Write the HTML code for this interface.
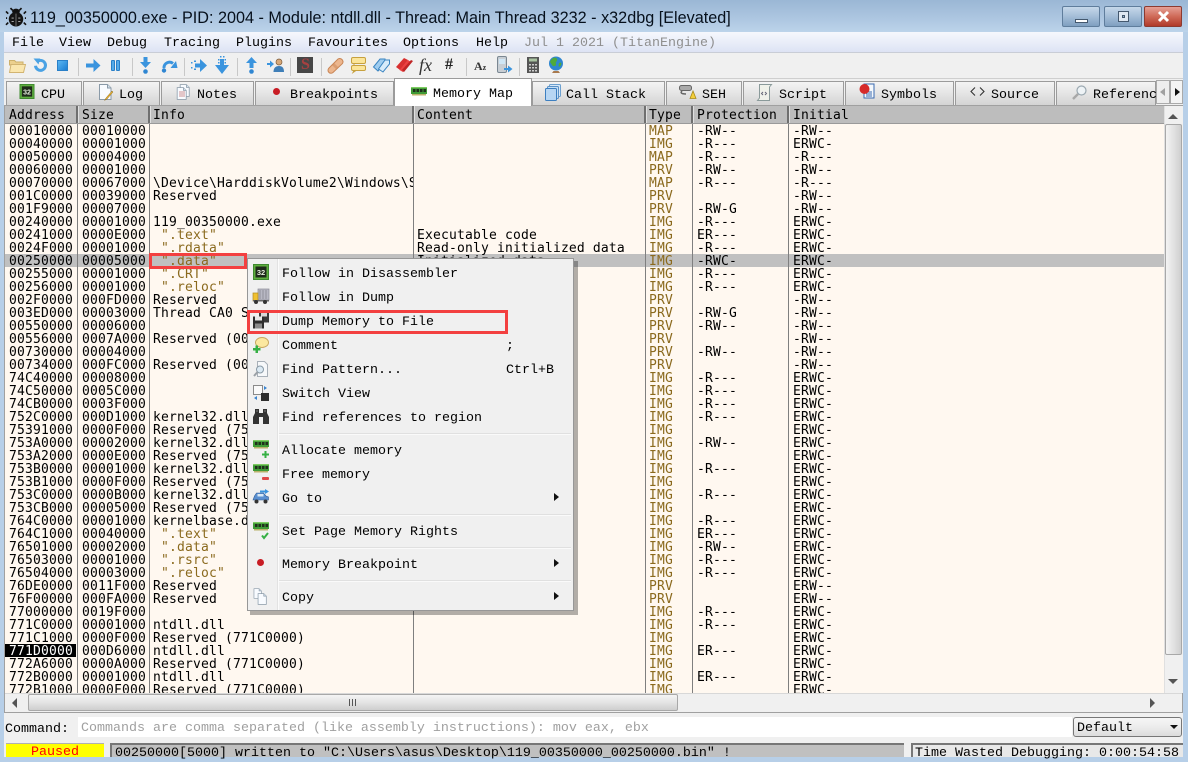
<!DOCTYPE html>
<html><head><meta charset="utf-8"><title>x32dbg</title>
<style>
html,body{margin:0;padding:0}
body{width:1188px;height:757px;overflow:hidden;position:relative;background:#b7cfe8;font-family:"Liberation Mono",monospace;font-size:13.33px;color:#000}
div,pre,span.a,svg.a{position:absolute}
svg{position:absolute;overflow:visible}
.t{position:absolute;white-space:pre;line-height:16px}
.tab{position:absolute;top:81px;height:24px;background:linear-gradient(#f4f4f4,#e6e6e6 45%,#d4d4d4);border:1px solid #9b9b9b;border-bottom:0;box-sizing:border-box}
.sep{position:absolute;top:58px;height:18px;width:1px;background:#c8c8c8}
pre{margin:0;font:13px/13px "DejaVu Sans Mono",monospace;letter-spacing:.17px;overflow:hidden;top:125px;height:569px}
pre b{font-weight:400;color:#8b6a1e}
.h{position:absolute;top:108px;font:13px/16px "DejaVu Sans Mono",monospace;letter-spacing:.17px;white-space:pre}
.vl{position:absolute;top:124px;height:569px;width:1px;background:#7f7f7f}
.hs{position:absolute;top:106px;height:17px;width:2px;background:#6f6f6f;border-right:1px solid #e0e0e0}
.ms{position:absolute;left:279px;width:292px;height:2px;background:#e0e0e0;border-bottom:1px solid #fafafa;box-sizing:border-box}
.red{position:absolute;border:3px solid #f34040;box-sizing:border-box}
.arr{position:absolute;width:0;height:0;border-left:5px solid #111;border-top:4px solid transparent;border-bottom:4px solid transparent}
</style></head><body>
<svg width="0" height="0" style="position:absolute">
<defs>
<symbol id="chip" viewBox="0 0 16 16"><rect x="0" y="0" width="16" height="16" fill="#3e8a2e"/><rect x="1" y="1" width="14" height="14" fill="#5fae3f"/><rect x="2.500" y="2.500" width="11" height="11" fill="#1e2a1a"/><text x="8" y="11" text-anchor="middle" font-family="Liberation Sans" font-weight="700" font-size="7.500" fill="#e6eedc">32</text></symbol>
<symbol id="ram" viewBox="0 0 16 9"><rect y="0" width="16" height="7" fill="#3f9a36"/><rect y="0" width="16" height="1.2" fill="#7fcb63"/><path d="M2 2h2.500v3H2zM5.500 2H8v3H5.500zM9 2h2.500v3H9zM12.500 2H15v3h-2.500z" fill="#20301c"/><path d="M1 7h14v1.500H1z" fill="#b9b26a"/></symbol>
<symbol id="page" viewBox="0 0 14 16"><path d="M1.500.5h8l3.500 3.500v11.500h-11.500z" fill="#f8fbff" stroke="#8a9aa8"/><path d="M9.500.5v3.500h3.500" fill="#d4e2ee" stroke="#8a9aa8"/></symbol>
</defs></svg>

<!-- title bar -->
<div style="left:0;top:0;width:1188px;height:32px;background:linear-gradient(#9ab7d5,#aac4df 50%,#bcd3ea)"></div>
<svg style="left:6px;top:7px" width="20" height="20" viewBox="0 0 18 18"><path d="M6 3L4 1M12 3l2-2M2 6L0 4M16 6l2-2M1 10H0M17 10h1M2 14l-2 2M16 14l2 2" stroke="#111" stroke-width="1.500" fill="none"/><ellipse cx="9" cy="4" rx="3.500" ry="2.500" fill="#111"/><ellipse cx="9" cy="11" rx="6.500" ry="6.500" fill="#151515"/><path d="M9 6v11" stroke="#888" stroke-width=".7"/><path d="M5 10h2M11 10h2M5 13h2M11 13h2" stroke="#bbb" stroke-width=".8"/></svg>
<div class="t" id="title" style="left:30px;top:9px;font:16.22px/18px 'Liberation Sans',sans-serif;color:#06101c">119_00350000.exe - PID: 2004 - Module: ntdll.dll - Thread: Main Thread 3232 - x32dbg [Elevated]</div>
<div style="left:1062px;top:6px;width:38px;height:21px;box-sizing:border-box;border:1px solid #5f7d9c;border-radius:2px;background:linear-gradient(#c6d8ea,#a4bdd7 50%,#7f9fc0)"><div style="left:12px;top:12px;width:13px;height:4px;background:#fff;border:1px solid #44586e;box-sizing:border-box"></div></div>
<div style="left:1104px;top:6px;width:38px;height:21px;box-sizing:border-box;border:1px solid #5f7d9c;border-radius:2px;background:linear-gradient(#c6d8ea,#a4bdd7 50%,#7f9fc0)"><div style="left:13px;top:4px;width:11px;height:11px;border:1px solid #44586e;box-sizing:border-box;background:#dfe8f2"><div style="left:3px;top:3px;width:3px;height:3px;background:#9ab4ce;border:1px solid #44586e;box-sizing:border-box"></div></div></div>
<div style="left:1144px;top:6px;width:38px;height:21px;box-sizing:border-box;border:1px solid #8c3a30;border-radius:2px;background:linear-gradient(#e5a095,#cf6a58 50%,#b03a2a)"><svg style="left:12px;top:4px" width="13" height="11"><path d="M2 1l9 9M11 1l-9 9" stroke="#fff" stroke-width="3"/></svg></div>

<!-- client -->
<div style="left:4px;top:32px;width:1179px;height:725px;background:#f0f0f0"></div>
<div style="left:4px;top:32px;width:1179px;height:20px;background:linear-gradient(#f6f8fd,#dde3f4);border-bottom:1px solid #c9cdd6;box-sizing:content-box"></div>
<div class="t" style="left:12px;top:36px">File</div>
<div class="t" style="left:59px;top:36px">View</div>
<div class="t" style="left:107px;top:36px">Debug</div>
<div class="t" style="left:164px;top:36px">Tracing</div>
<div class="t" style="left:236px;top:36px">Plugins</div>
<div class="t" style="left:308px;top:36px">Favourites</div>
<div class="t" style="left:403px;top:36px">Options</div>
<div class="t" style="left:476px;top:36px">Help</div>
<div class="t" style="left:524px;top:36px;color:#8f8f8f">Jul 1 2021 (TitanEngine)</div>
<div style="left:4px;top:78px;width:1179px;height:1px;background:#cfcfcf"></div>

<!-- toolbar -->
<svg style="left:9px;top:59px" width="17" height="14" viewBox="0 0 17 14"><path d="M.500 1.500h5l1.500 1.500h7v3H.500z" fill="#ecd08e" stroke="#cdb06a"/><path d="M.500 13.500l1.500-8h14.500l-2 8z" fill="#fae6ae" stroke="#d2b472"/></svg>
<svg style="left:33px;top:58px" width="15" height="15" viewBox="0 0 15 15"><path d="M4 3.800a5 5 0 1 1-1.500 4" fill="none" stroke="#4aa2e4" stroke-width="3"/><path d="M0.500 0.500l6.500 0 -1.500 6z" fill="#4aa2e4"/></svg>
<div style="left:57px;top:60px;width:11px;height:11px;box-sizing:border-box;background:linear-gradient(135deg,#5ab6f2,#1d7fd3);border:1px solid #2a80c8"></div>
<div class="sep" style="left:78px"></div>
<svg style="left:86px;top:59px" width="15" height="13" viewBox="0 0 15 13"><path d="M0 4.500h7.500V0l7 6.500-7 6.500V8.500H0z" fill="#3a94de"/></svg>
<div style="left:111px;top:60px;width:4px;height:11px;box-sizing:border-box;background:#55aae8;border:1px solid #2a80c8;border-radius:1px"></div><div style="left:116px;top:60px;width:4px;height:11px;box-sizing:border-box;background:#55aae8;border:1px solid #2a80c8;border-radius:1px"></div>
<div class="sep" style="left:132px"></div>
<svg style="left:140px;top:57px" width="11" height="17" viewBox="0 0 11 17"><path d="M3.500 0h4v5H11l-5.500 6L0 5h3.500z" fill="#3a94de"/><circle cx="5.500" cy="14.500" r="2.300" fill="#2f86d2"/></svg>
<svg style="left:161px;top:59px" width="17" height="14" viewBox="0 0 17 14"><path d="M3 9a5.500 5.500 0 0 1 9-4.500" fill="none" stroke="#3a94de" stroke-width="3"/><path d="M16.500 9h-7L15 2z" fill="#3a94de"/><circle cx="3" cy="11.500" r="2.200" fill="#2f86d2"/></svg>
<div class="sep" style="left:184px"></div>
<svg style="left:191px;top:59px" width="16" height="13" viewBox="0 0 16 13"><path d="M0 3h1.500v1.500H0zM0 8h1.500v1.500H0zM3 1.500h2V3H3zM3 9.500h2V11H3zM4 4.500h5V0l7 6.500-7 6.500V8.500H4z" fill="#3a94de"/></svg>
<svg style="left:215px;top:56px" width="14" height="18" viewBox="0 0 14 18"><path d="M5 3h4v6h5l-7 9-7-9h5z" fill="#3a94de"/><path d="M5 0h1.500v1.500H5zM8 0h1.500v1.500H8zM3 3h1.500v1.500H3zM9.500 3H11v1.500H9.500zM3 6h1.500v1.500H3zM9.500 6H11v1.500H9.500z" fill="#3a94de"/></svg>
<div class="sep" style="left:237px"></div>
<svg style="left:246px;top:57px" width="11" height="17" viewBox="0 0 11 17"><path d="M5.500 0L11 6H7.500v5h-4V6H0z" fill="#3a94de"/><circle cx="5.500" cy="14.500" r="2.300" fill="#2f86d2"/></svg>
<svg style="left:267px;top:58px" width="17" height="15" viewBox="0 0 17 15"><path d="M0 5h3V2.500L7 6 3 9.500V7H0z" fill="#3a94de"/><circle cx="12" cy="4" r="3" fill="#d8a878" stroke="#7a5a3a" stroke-width=".7"/><path d="M6.500 14c0-4 2-6 5.500-6s5 2 5 6z" fill="#3f7fb8"/></svg>
<div class="sep" style="left:290px"></div>
<div style="left:297px;top:57px;width:16px;height:16px;background:#474747"></div>
<div class="t" style="left:301px;top:57px;color:#a84040;font:bold 16px/16px 'Liberation Serif',serif">S</div>
<div class="sep" style="left:321px"></div>
<svg style="left:327px;top:57px" width="17" height="17" viewBox="0 0 17 17"><path d="M2 11L11 2a3.300 3.300 0 0 1 4.500 4.500L6 15.500A3 3 0 0 1 2 11z" fill="#ecb68e" stroke="#c98555"/><path d="M6 7l4 4" stroke="#c98555" stroke-width="3" opacity=".5"/></svg>
<svg style="left:351px;top:57px" width="15" height="16" viewBox="0 0 15 16"><rect x=".5" y=".5" width="14" height="6" rx="1.500" fill="#fbe59a" stroke="#c7a13e"/><rect x=".5" y="8.500" width="14" height="5" rx="1.500" fill="#fbe59a" stroke="#c7a13e"/><path d="M3 6.500v2M3 13.500l-1 2 3-2" stroke="#c7a13e" fill="none"/></svg>
<svg style="left:373px;top:57px" width="17" height="16" viewBox="0 0 17 16"><path d="M0.500 10L7 2l5 0 0 4-7 8z" fill="#9fcdf0" stroke="#3a84c0"/><path d="M5.500 12L12 3l4.500 0 0 4-6.500 8z" fill="#d6ebfa" stroke="#3a84c0"/></svg>
<svg style="left:396px;top:57px" width="18" height="16" viewBox="0 0 18 16"><path d="M0 10L8 1l4 2-8 10z" fill="#d83030"/><path d="M3.500 13L12 3l3 2-8 10z" fill="#ec4040"/><path d="M8 15l9-11-2-1-9 10z" fill="#bf2525"/></svg>
<div class="t" style="left:419px;top:56px;font:italic 18px/18px 'Liberation Serif',serif;color:#333">fx</div>
<div class="t" style="left:445px;top:56px;font:bold 16px/18px 'Liberation Serif',serif;color:#222">#</div>
<div class="sep" style="left:466px"></div>
<div class="t" style="left:474px;top:58px;font:bold 12px/16px 'Liberation Serif',serif;color:#333">A<span style="font-size:8px">z</span></div>
<svg style="left:497px;top:56px" width="16" height="18" viewBox="0 0 16 18"><rect x=".5" y=".5" width="9" height="16" rx="1.500" fill="#c8ced4" stroke="#7a8792"/><rect x="2" y="3" width="6" height="5" fill="#cfe6f5"/><path d="M7 12h4V9.500l4.500 3.500-4.500 3.500V14H7z" fill="#3a94de"/></svg>
<div class="sep" style="left:519px"></div>
<svg style="left:527px;top:57px" width="12" height="16" viewBox="0 0 12 16"><rect width="12" height="16" fill="#555"/><rect x="2" y="1.500" width="8" height="3" fill="#a8c2a0"/><path d="M2 7h2v1.500H2zM5 7h2v1.500H5zM8 7h2v1.500H8zM2 10h2v1.500H2zM5 10h2v1.500H5zM8 10h2v1.500H8zM2 13h2v1.500H2zM5 13h2v1.500H5zM8 13h2v1.500H8z" fill="#ccc"/></svg>
<svg style="left:548px;top:56px" width="16" height="18" viewBox="0 0 16 18"><circle cx="8" cy="7.500" r="7" fill="#2e86d0"/><path d="M3 4c2-3 5-3 6-1s-2 3-1 5-3 3-4 1-3-3-1-5zM11 7c2-1 3 0 2 2s-2 2-2.500 1z" fill="#4faa3a"/><path d="M4 17h8l-1.500-2h-5z" fill="#a8794e"/></svg>

<!-- tabs -->
<div style="left:4px;top:105px;width:1179px;height:608px;background:#f0f0f0;border:1px solid #a0a0a0;box-sizing:border-box"></div>
<div class="tab" style="left:6px;width:76px"></div>
<div class="tab" style="left:83px;width:77px"></div>
<div class="tab" style="left:161px;width:93px"></div>
<div class="tab" style="left:255px;width:139px"></div>
<div class="tab" style="left:532px;width:133px"></div>
<div class="tab" style="left:666px;width:76px"></div>
<div class="tab" style="left:743px;width:101px"></div>
<div class="tab" style="left:845px;width:109px"></div>
<div class="tab" style="left:955px;width:100px"></div>
<div class="tab" style="left:1056px;width:100px"></div>
<div class="tab" style="left:394px;top:78px;width:138px;height:28px;background:#fff"></div>
<svg style="left:19px;top:84px" width="16" height="15"><use href="#chip" width="16" height="15"/></svg>
<div class="t" style="left:41px;top:88px">CPU</div>
<svg style="left:98px;top:84px" width="15" height="17"><use href="#page" width="14" height="16"/><path d="M14 7L8 14l-1.500 2.500L9 15l6-7z" fill="#e8b030" stroke="#8a6a20" stroke-width=".5"/></svg>
<div class="t" style="left:119px;top:88px">Log</div>
<svg style="left:176px;top:84px" width="15" height="16"><use href="#page" x="3" width="11" height="13"/><use href="#page" y="3" width="11" height="13"/><path d="M3 8h6M3 10h6M3 12h6" stroke="#c07070" stroke-width=".7"/></svg>
<div class="t" style="left:197px;top:88px">Notes</div>
<div style="left:273px;top:88px;width:7px;height:7px;border-radius:50%;background:#c81c24"></div>
<div class="t" style="left:290px;top:88px">Breakpoints</div>
<svg style="left:411px;top:87px" width="16" height="9"><use href="#ram" width="16" height="9"/></svg>
<div class="t" style="left:433px;top:87px">Memory Map</div>
<svg style="left:545px;top:84px" width="16" height="17" viewBox="0 0 16 17"><rect x="4.500" y=".5" width="11" height="12" rx="1" fill="#d7e8f8" stroke="#6ca0d0"/><rect x="2.500" y="2.500" width="11" height="12" rx="1" fill="#c5def5" stroke="#5a92c8"/><rect x=".5" y="4.500" width="11" height="12" rx="1" fill="#b7d6f3" stroke="#3d7fc0"/></svg>
<div class="t" style="left:566px;top:88px">Call Stack</div>
<svg style="left:679px;top:85px" width="17" height="14" viewBox="0 0 17 14"><rect x=".5" y=".5" width="12" height="5" rx="2" fill="#aaa" stroke="#666"/><path d="M11 13.500L14 6l3 7.500z" fill="#f4cf3a" stroke="#a88a1a" stroke-width=".8"/><path d="M3 6c-3 3 3 3 4 3" stroke="#666" fill="none" stroke-width="1.500"/></svg>
<div class="t" style="left:702px;top:88px">SEH</div>
<svg style="left:757px;top:84px" width="15" height="17" viewBox="0 0 15 17"><path d="M2.500.5H14.500L12.500 3v13.500H.5L2.500 14z" fill="#f0f2ea" stroke="#8a9a9a"/><path d="M6 8L4.500 9.500 6 11M8 8l1.500 1.500L8 11" stroke="#667" fill="none"/></svg>
<div class="t" style="left:779px;top:88px">Script</div>
<svg style="left:859px;top:83px" width="16" height="17" viewBox="0 0 16 17"><rect x="5" y="1" width="10" height="14" fill="#f4f8fc" stroke="#3a6ab0"/><path d="M7 9h6M7 11h6M7 13h6" stroke="#3a6ab0"/><circle cx="5.500" cy="6" r="5" fill="#d62a2a"/></svg>
<div class="t" style="left:881px;top:88px">Symbols</div>
<svg style="left:970px;top:87px" width="15" height="9"><path d="M5 .5L1 4.500l4 4M10 .5l4 4-4 4" stroke="#333" fill="none" stroke-width="1.100"/></svg>
<div class="t" style="left:991px;top:88px">Source</div>
<svg style="left:1072px;top:85px" width="15" height="15"><circle cx="9.500" cy="5.500" r="4.500" fill="#eef3f6" stroke="#9aa8b0" stroke-width="1.200"/><path d="M6 9L1 14" stroke="#a8a8a8" stroke-width="2.500"/></svg>
<div class="t" style="left:1093px;top:88px;width:63px;overflow:hidden">Reference</div>
<div style="left:1156px;top:80px;width:14px;height:24px;background:#eee;border:1px solid #aaa;box-sizing:border-box"><div style="left:3px;top:7px;width:0;height:0;border-right:5px solid #a0a0a0;border-top:4px solid transparent;border-bottom:4px solid transparent"></div></div>
<div style="left:1170px;top:80px;width:13px;height:24px;background:#f4f4f4;border:1px solid #aaa;box-sizing:border-box"><div class="arr" style="left:4px;top:7px"></div></div>

<!-- table -->
<div style="left:5px;top:106px;width:1159px;height:587px;background:#fff8f0"></div>
<div style="left:5px;top:106px;width:1159px;height:18px;background:#bdbdbd;border-bottom:1px solid #9a9a9a;box-sizing:border-box"></div>
<div class="hs" style="left:76px"></div><div class="hs" style="left:148px"></div><div class="hs" style="left:412px"></div><div class="hs" style="left:644px"></div><div class="hs" style="left:691px"></div><div class="hs" style="left:787px"></div>
<div class="h" style="left:9px">Address</div><div class="h" style="left:82px">Size</div><div class="h" style="left:153px">Info</div><div class="h" style="left:417px">Content</div><div class="h" style="left:649px">Type</div><div class="h" style="left:697px">Protection</div><div class="h" style="left:793px">Initial</div>
<div style="left:5px;top:254px;width:1159px;height:13px;background:#c0c0c0"></div>
<div style="left:5px;top:644px;width:71px;height:13px;background:#000"></div>
<div class="vl" style="left:77px"></div><div class="vl" style="left:149px"></div><div class="vl" style="left:413px"></div><div class="vl" style="left:645px"></div><div class="vl" style="left:692px"></div><div class="vl" style="left:788px"></div>
<pre style="left:9px;width:67px;height:568px">00010000
00040000
00050000
00060000
00070000
001C0000
001F9000
00240000
00241000
0024F000
00250000
00255000
00256000
002F0000
003ED000
00550000
00556000
00730000
00734000
74C40000
74C50000
74CB0000
752C0000
75391000
753A0000
753A2000
753B0000
753B1000
753C0000
753CB000
764C0000
764C1000
76501000
76503000
76504000
76DE0000
76F00000
77000000
771C0000
771C1000
<span style="color:#fff">771D0000</span>
772A6000
772B0000
772B1000</pre>
<pre style="left:82px;width:66px;height:568px">00010000
00001000
00004000
00001000
00067000
00039000
00007000
00001000
0000E000
00001000
00005000
00001000
00001000
000FD000
00003000
00006000
0007A000
00004000
000FC000
00008000
0005C000
0003F000
000D1000
0000F000
00002000
0000E000
00001000
0000F000
0000B000
00005000
00001000
00040000
00002000
00001000
00003000
0011F000
000FA000
0019F000
00001000
0000F000
000D6000
0000A000
00001000
0000F000</pre>
<pre style="left:153px;width:260px;height:568px">




\Device\HarddiskVolume2\Windows\S
Reserved

119_00350000.exe
<b> ".text"</b>
<b> ".rdata"</b>
<b> ".data"</b>
<b> ".CRT"</b>
<b> ".reloc"</b>
Reserved
Thread CA0 Stack

Reserved (00550000)

Reserved (00730000)



kernel32.dll
Reserved (752C0000)
kernel32.dll
Reserved (752C0000)
kernel32.dll
Reserved (752C0000)
kernel32.dll
Reserved (752C0000)
kernelbase.dll
<b> ".text"</b>
<b> ".data"</b>
<b> ".rsrc"</b>
<b> ".reloc"</b>
Reserved
Reserved

ntdll.dll
Reserved (771C0000)
ntdll.dll
Reserved (771C0000)
ntdll.dll
Reserved (771C0000)</pre>
<pre style="left:417px;width:228px;height:568px">








Executable code
Read-only initialized data
Initialized data</pre>
<pre style="left:649px;width:42px;height:568px;color:#8b6a1e">MAP
IMG
MAP
PRV
MAP
PRV
PRV
IMG
IMG
IMG
IMG
IMG
IMG
PRV
PRV
PRV
PRV
PRV
PRV
IMG
IMG
IMG
IMG
IMG
IMG
IMG
IMG
IMG
IMG
IMG
IMG
IMG
IMG
IMG
IMG
PRV
PRV
IMG
IMG
IMG
IMG
IMG
IMG
IMG</pre>
<pre style="left:697px;width:90px;height:568px">-RW--
-R---
-R---
-RW--
-R---

-RW-G
-R---
ER---
-R---
-RWC-
-R---
-R---

-RW-G
-RW--

-RW--

-R---
-R---
-R---
-R---

-RW--

-R---

-R---

-R---
ER---
-RW--
-R---
-R---


-R---
-R---

ER---

ER---
</pre>
<pre style="left:793px;width:370px;height:568px">-RW--
ERWC-
-R---
-RW--
-R---
-RW--
-RW--
ERWC-
ERWC-
ERWC-
ERWC-
ERWC-
ERWC-
-RW--
-RW--
-RW--
-RW--
-RW--
-RW--
ERWC-
ERWC-
ERWC-
ERWC-
ERWC-
ERWC-
ERWC-
ERWC-
ERWC-
ERWC-
ERWC-
ERWC-
ERWC-
ERWC-
ERWC-
ERWC-
ERW--
ERW--
ERWC-
ERWC-
ERWC-
ERWC-
ERWC-
ERWC-
ERWC-</pre>

<!-- v scrollbar -->
<div style="left:1164px;top:106px;width:19px;height:587px;background:#f0f0f0;border-left:1px solid #e0e0e0;box-sizing:border-box"></div>
<div style="left:1165px;top:124px;width:17px;height:531px;background:linear-gradient(90deg,#f3f3f3,#e2e2e2 50%,#cfcfcf);border:1px solid #a8a8a8;box-sizing:border-box;border-radius:2px"></div>
<div style="left:1168px;top:114px;width:0;height:0;border-bottom:5px solid #555;border-left:5px solid transparent;border-right:5px solid transparent"></div>
<div style="left:1168px;top:679px;width:0;height:0;border-top:5px solid #555;border-left:5px solid transparent;border-right:5px solid transparent"></div>

<!-- h scrollbar -->
<div style="left:5px;top:693px;width:1177px;height:19px;background:#f0f0f0;border-top:1px solid #d8d8d8;box-sizing:border-box"></div>
<div style="left:28px;top:694px;width:650px;height:17px;background:linear-gradient(#f4f4f4,#e4e4e4 50%,#cecece);border:1px solid #a8a8a8;box-sizing:border-box;border-radius:2px"></div>
<div style="left:349px;top:699px;width:7px;height:7px;background:repeating-linear-gradient(90deg,#555 0 1px,transparent 1px 3px)"></div>
<div style="left:12px;top:698px;width:0;height:0;border-right:5px solid #555;border-top:5px solid transparent;border-bottom:5px solid transparent"></div>
<div style="left:1150px;top:698px;width:0;height:0;border-left:5px solid #555;border-top:5px solid transparent;border-bottom:5px solid transparent"></div>

<!-- command -->
<div class="t" style="left:5px;top:722px">Command:</div>
<div style="left:78px;top:717px;width:994px;height:20px;background:#fff"></div>
<div class="t" style="left:81px;top:721px;color:#a0a0a0">Commands are comma separated (like assembly instructions): mov eax, ebx</div>
<div style="left:1073px;top:717px;width:109px;height:20px;box-sizing:border-box;border:1px solid #777;border-radius:3px;background:linear-gradient(#f6f6f6,#ececec 50%,#dcdcdc)"></div>
<div class="t" style="left:1077px;top:721px">Default</div>
<div style="left:1170px;top:725px;width:0;height:0;border-top:4px solid #111;border-left:4px solid transparent;border-right:4px solid transparent"></div>

<!-- status -->
<div style="left:6px;top:743px;width:98px;height:14px;background:#ffff00;border-top:1px solid #b0b0b0;box-sizing:border-box"></div>
<div class="t" style="left:6px;top:745px;width:98px;text-align:center;color:#f00">Paused</div>
<div style="left:110px;top:743px;width:794px;height:14px;background:#c0c0c0;border-top:2px solid #777;border-left:2px solid #777;box-sizing:border-box"></div>
<div class="t" style="left:115px;top:746px">00250000[5000] written to "C:\Users\asus\Desktop\119_00350000_00250000.bin" !</div>
<div style="left:911px;top:743px;width:272px;height:14px;background:#e8e8e8;border-top:2px solid #777;border-left:2px solid #777;box-sizing:border-box"></div>
<div class="t" style="left:915px;top:746px">Time Wasted Debugging: 0:00:54:58</div>

<!-- context menu -->
<div style="left:250px;top:261px;width:328px;height:354px;background:rgba(0,0,0,.3)"></div>
<div style="left:247px;top:258px;width:327px;height:353px;background:#f0f0f0;border:1px solid #979797;box-sizing:border-box"></div>
<div style="left:277px;top:259px;width:1px;height:351px;background:#e2e2e2"></div>
<div style="left:278px;top:259px;width:1px;height:351px;background:#fbfbfb"></div>
<div class="ms" style="top:433px"></div><div class="ms" style="top:514px"></div><div class="ms" style="top:547px"></div><div class="ms" style="top:580px"></div>
<svg style="left:253px;top:264px" width="16" height="16"><use href="#chip" width="16" height="16"/></svg>
<svg style="left:253px;top:289px" width="16" height="15" viewBox="0 0 16 15"><rect x="5" y="0" width="11" height="11" fill="#b8b8c4" stroke="#8a8a96" stroke-width=".7"/><path d="M7 1v9M10 1v9M13 1v9" stroke="#8f8f9a"/><rect x="0" y="4" width="5" height="8" fill="#f0c030" stroke="#b08a20" stroke-width=".7"/><path d="M0 11h16v1.500H0z" fill="#666"/><circle cx="3" cy="13" r="2" fill="#333"/><circle cx="12" cy="13" r="2" fill="#333"/></svg>
<svg style="left:253px;top:312px" width="16" height="17" viewBox="0 0 16 16"><rect x="6" y="0" width="10" height="10" fill="#3a3a3a"/><rect x="8" y="0" width="6" height="4" fill="#d8d8d8"/><rect x="0" y="4" width="11" height="12" fill="#2e2e2e"/><rect x="2" y="4" width="7" height="4" fill="#e8e8e8"/><rect x="2" y="11" width="7" height="5" fill="#8a8a8a"/></svg>
<svg style="left:253px;top:337px" width="16" height="16" viewBox="0 0 16 16"><ellipse cx="9" cy="5.500" rx="6.500" ry="5" fill="#fbe8a0" stroke="#c7a860"/><path d="M0 11h2.500V8.500h2.500V11H7.500v2.500H5V16H2.500v-2.500H0z" fill="#36b045"/></svg>
<svg style="left:253px;top:361px" width="16" height="16" viewBox="0 0 16 16"><path d="M4.500.5h7l3 3v12h-10z" fill="#f6f8fa" stroke="#a8b0b8"/><circle cx="7" cy="8.500" r="3.500" fill="#dbe9f3" stroke="#8a9aa6"/><path d="M4.500 11L1 15" stroke="#9aa0a6" stroke-width="2"/></svg>
<svg style="left:253px;top:385px" width="16" height="16" viewBox="0 0 16 16"><rect x=".5" y=".5" width="9" height="9" fill="#fafafa" stroke="#8a8a8a"/><rect x="8" y="8" width="8" height="8" fill="#2e2e2e"/><path d="M11 1l3 2-3 2M1 13l3 2v-4z" fill="#3a84d0"/></svg>
<svg style="left:253px;top:408px" width="16" height="17" viewBox="0 0 16 17"><path d="M2 1h4v4h4V1h4v4l2 4v7h-6V9H6v7H0V9l2-4z" fill="#333"/><path d="M3 3h2M11 3h2" stroke="#777"/></svg>
<svg style="left:253px;top:440px" width="16" height="18"><use href="#ram" width="16" height="9"/><path d="M10 13.500h2.500V11h2v2.500H17v2h-2.500V18h-2v-2.500H10z" fill="#36b045" transform="translate(-1 0)"/></svg>
<svg style="left:253px;top:464px" width="16" height="18"><use href="#ram" width="16" height="9"/><rect x="9" y="13" width="7" height="3" rx="1" fill="#e04848"/></svg>
<svg style="left:253px;top:489px" width="16" height="15" viewBox="0 0 16 15"><path d="M0 11l1.500-4 2-3h7l2.500 3 2.500 1v3z" fill="#5a8fd0" stroke="#345e96" stroke-width=".6"/><rect x="4.500" y="5" width="6" height="2.500" fill="#d8e8f5"/><circle cx="3.500" cy="12.500" r="2" fill="#333"/><circle cx="12.500" cy="12.500" r="2" fill="#333"/><path d="M7 1.500h5V0l4 2.500L12 5V3.500H7z" fill="#3a94de"/></svg>
<svg style="left:253px;top:522px" width="16" height="18"><use href="#ram" width="16" height="9"/><path d="M9 13.500l2 2.500 4-5" stroke="#36b045" stroke-width="2" fill="none"/></svg>
<div style="left:257px;top:559px;width:7px;height:7px;border-radius:50%;background:#c81c24"></div>
<svg style="left:253px;top:588px" width="15" height="17" viewBox="0 0 15 17"><use href="#page" width="9" height="11"/><use href="#page" x="4" y="5" width="10" height="12"/></svg>

<div class="t" style="left:282px;top:267px">Follow in Disassembler</div>
<div class="t" style="left:282px;top:291px">Follow in Dump</div>
<div class="t" style="left:282px;top:315px">Dump Memory to File</div>
<div class="t" style="left:282px;top:339px">Comment</div>
<div class="t" style="left:506px;top:339px">;</div>
<div class="t" style="left:282px;top:363px">Find Pattern...</div>
<div class="t" style="left:506px;top:363px">Ctrl+B</div>
<div class="t" style="left:282px;top:387px">Switch View</div>
<div class="t" style="left:282px;top:411px">Find references to region</div>
<div class="t" style="left:282px;top:444px">Allocate memory</div>
<div class="t" style="left:282px;top:468px">Free memory</div>
<div class="t" style="left:282px;top:492px">Go to</div>
<div class="arr" style="left:554px;top:493px"></div>
<div class="t" style="left:282px;top:525px">Set Page Memory Rights</div>
<div class="t" style="left:282px;top:558px">Memory Breakpoint</div>
<div class="arr" style="left:554px;top:559px"></div>
<div class="t" style="left:282px;top:591px">Copy</div>
<div class="arr" style="left:554px;top:592px"></div>

<!-- annotations -->
<div class="red" style="left:149px;top:253px;width:98px;height:16px"></div>
<div class="red" style="left:247px;top:310px;width:261px;height:24px"></div>
</body></html>
